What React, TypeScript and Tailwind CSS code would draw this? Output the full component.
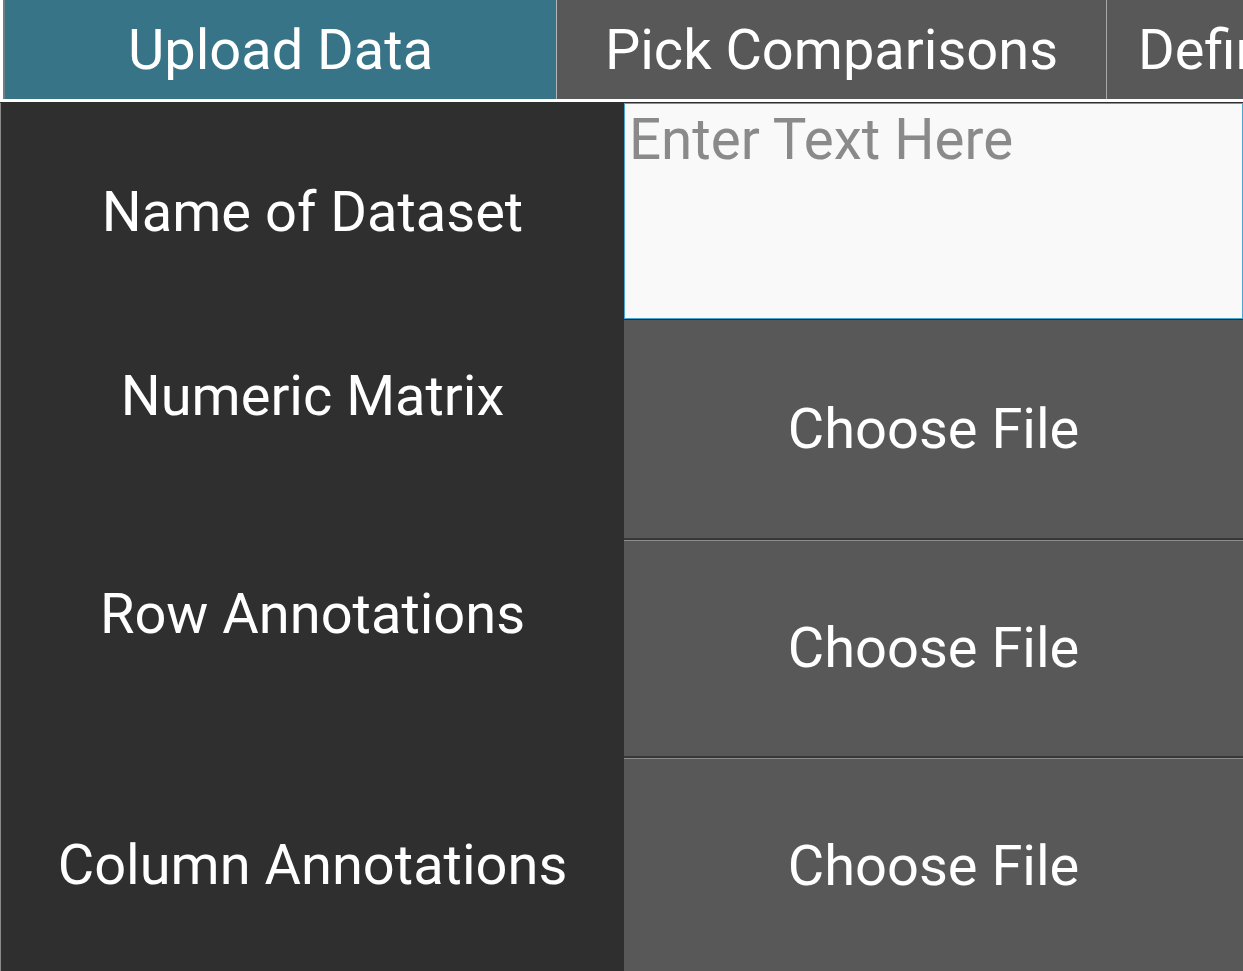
import React from "react";

const tabs = [
  { label: "Upload Data", active: true },
  { label: "Pick Comparisons", active: false },
  { label: "Define Groups", active: false },
];

const rows = [
  { label: "Name of Dataset", offset: "" },
  { label: "Numeric Matrix", offset: "pb-[66px]" },
  { label: "Row Annotations", offset: "pb-[66px]" },
  { label: "Column Annotations", offset: "pb-[0px]" },
];

const App = () => {
  return (
    <div
      className="h-[971px] w-[1243px] overflow-hidden bg-[#2f2f2f]"
      style={{ fontFamily: "Roboto, 'Noto Sans', sans-serif" }}
    >
      {/* Tab bar */}
      <div className="flex h-[102px] border-b-[3px] border-white bg-white pl-[3px]">
        <div className="flex h-[99px] w-full border-l-2 border-[#6f7f86]">
          {tabs.map((tab, i) => (
            <div
              key={tab.label}
              className={`flex h-full shrink-0 items-center text-[56px] text-white ${
                tab.active ? "bg-[#377487]" : "bg-[#585858]"
              } ${i === 2 ? "w-[400px] justify-start border-l border-[#a9a9a9] pl-[31px]" : "w-[550px] justify-center"} ${
                i === 1 ? "border-l border-[#b5b5b5]" : ""
              } ${i === 0 ? "w-[551px]" : ""}`}
            >
              <span className="whitespace-nowrap">{tab.label}</span>
            </div>
          ))}
        </div>
      </div>

      {/* Form */}
      <div className="grid grid-cols-[624px_1fr] pt-[1px]">
        {/* Labels */}
        <div className="flex flex-col border-l border-[#8a8a8a] bg-[#2f2f2f]">
          {rows.map((row, i) => (
            <div
              key={row.label}
              className={`flex items-center justify-center text-[56px] text-white ${row.offset} ${
                i === 0 ? "h-[217px]" : "h-[218px]"
              }`}
            >
              <span className="whitespace-nowrap">{row.label}</span>
            </div>
          ))}
        </div>

        {/* Inputs */}
        <div className="flex flex-col">
          <div className="h-[217px] border-b border-[#2e2e2e]">
            <textarea
              placeholder="Enter Text Here"
              className="h-full w-full resize-none border border-[#4aa6cf] bg-[#f9f9f9] px-[4px] pt-[8px] text-[56.5px] leading-[56px] text-[#333] outline-none placeholder:text-[#8a8a8a]"
            />
          </div>
          {[0, 1, 2].map((i) => (
            <div
              key={i}
              className={`flex h-[218px] items-center justify-center bg-[#585858] text-[56px] text-white ${
                i === 0 ? "" : "border-t-2 border-[#373737] shadow-[inset_0_1px_0_#8c8c8c]"
              }`}
            >
              <span className="whitespace-nowrap">Choose File</span>
            </div>
          ))}
        </div>
      </div>
    </div>
  );
};

export default App;
